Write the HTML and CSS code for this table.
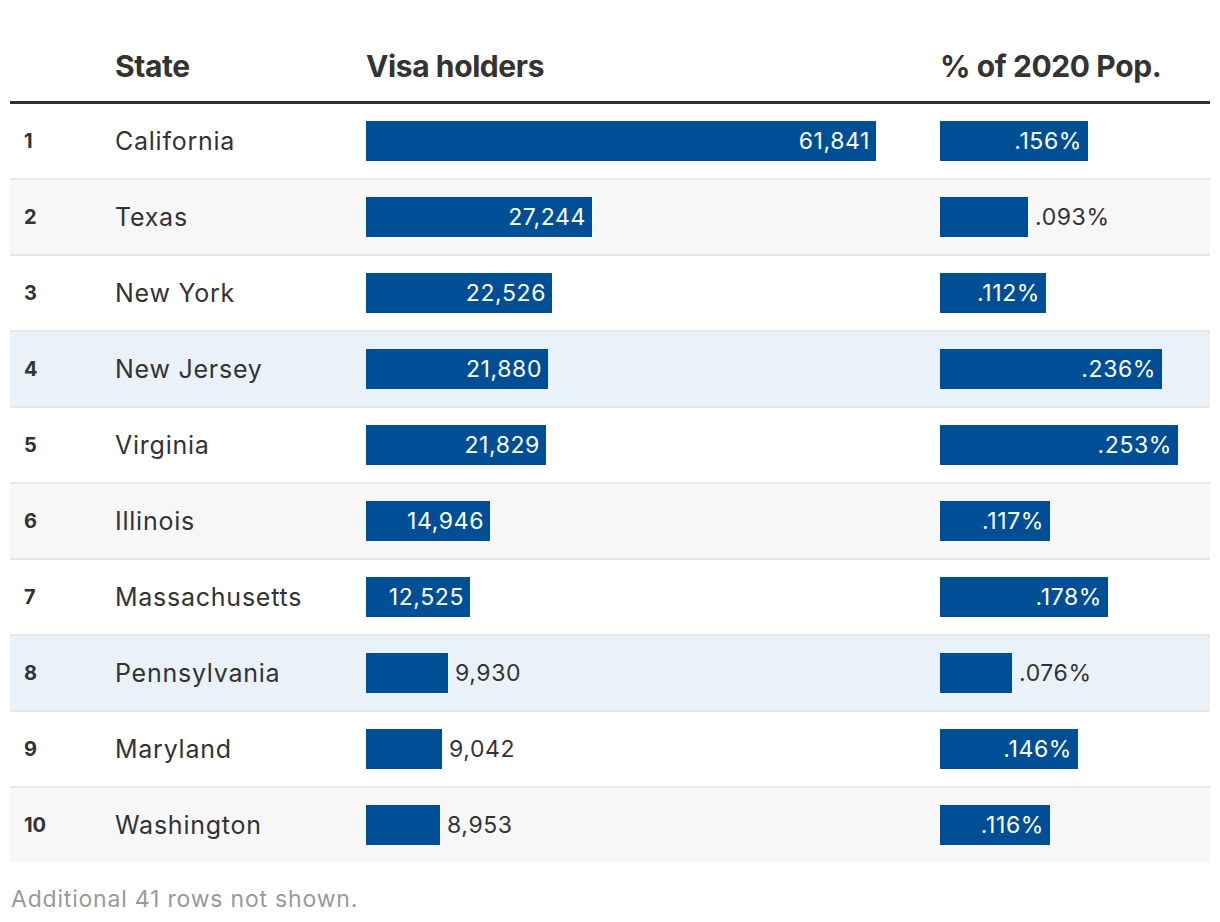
FILE: index.html
```html
<!DOCTYPE html>
<html lang="en">
<head>
<meta charset="utf-8">
<title>Visa holders by state</title>
<link rel="stylesheet" href="styles.css">
</head>
<body>
<div class="wrap">
  <div class="table">
    <div class="head">
      <div class="h-rank"></div>
      <div class="h-state">State</div>
      <div class="h-visa">Visa holders</div>
      <div class="h-pct">% of 2020 Pop.</div>
    </div>

    <div class="row">
      <div class="c-rank">1</div>
      <div class="c-state">California</div>
      <div class="c-visa"><div class="bar in" style="width:510px">61,841</div></div>
      <div class="c-pct"><div class="bar in" style="width:148px">.156%</div></div>
    </div>
    <div class="row alt">
      <div class="c-rank">2</div>
      <div class="c-state">Texas</div>
      <div class="c-visa"><div class="bar in" style="width:226px">27,244</div></div>
      <div class="c-pct"><div class="bar" style="width:88px"></div><span class="val">.093%</span></div>
    </div>
    <div class="row">
      <div class="c-rank">3</div>
      <div class="c-state">New York</div>
      <div class="c-visa"><div class="bar in" style="width:186px">22,526</div></div>
      <div class="c-pct"><div class="bar in" style="width:106px">.112%</div></div>
    </div>
    <div class="row hl">
      <div class="c-rank">4</div>
      <div class="c-state">New Jersey</div>
      <div class="c-visa"><div class="bar in" style="width:182px">21,880</div></div>
      <div class="c-pct"><div class="bar in" style="width:222px">.236%</div></div>
    </div>
    <div class="row">
      <div class="c-rank">5</div>
      <div class="c-state">Virginia</div>
      <div class="c-visa"><div class="bar in" style="width:180px">21,829</div></div>
      <div class="c-pct"><div class="bar in" style="width:238px">.253%</div></div>
    </div>
    <div class="row alt">
      <div class="c-rank">6</div>
      <div class="c-state">Illinois</div>
      <div class="c-visa"><div class="bar in" style="width:124px">14,946</div></div>
      <div class="c-pct"><div class="bar in" style="width:110px">.117%</div></div>
    </div>
    <div class="row">
      <div class="c-rank">7</div>
      <div class="c-state">Massachusetts</div>
      <div class="c-visa"><div class="bar in" style="width:104px">12,525</div></div>
      <div class="c-pct"><div class="bar in" style="width:168px">.178%</div></div>
    </div>
    <div class="row hl">
      <div class="c-rank">8</div>
      <div class="c-state">Pennsylvania</div>
      <div class="c-visa"><div class="bar" style="width:82px"></div><span class="val">9,930</span></div>
      <div class="c-pct"><div class="bar" style="width:72px"></div><span class="val">.076%</span></div>
    </div>
    <div class="row">
      <div class="c-rank">9</div>
      <div class="c-state">Maryland</div>
      <div class="c-visa"><div class="bar" style="width:76px"></div><span class="val">9,042</span></div>
      <div class="c-pct"><div class="bar in" style="width:138px">.146%</div></div>
    </div>
    <div class="row alt last">
      <div class="c-rank">10</div>
      <div class="c-state">Washington</div>
      <div class="c-visa"><div class="bar" style="width:74px"></div><span class="val">8,953</span></div>
      <div class="c-pct"><div class="bar in" style="width:110px">.116%</div></div>
    </div>
  </div>
  <p class="note">Additional 41 rows not shown.</p>
</div>
</body>
</html>
```

FILE: styles.css
```css
* { box-sizing: border-box; }

html, body {
  margin: 0;
  padding: 0;
  background: #fff;
}

body {
  font-family: Inter, "Noto Sans", "Liberation Sans", sans-serif;
  color: #333;
}

.wrap {
  padding: 0 10px;
}

.table {
  width: 1200px;
}

.head,
.row {
  display: grid;
  grid-template-columns: 105px 251px 574px 1fr;
  align-items: center;
}

.head {
  height: 104px;
  align-items: end;
  padding-bottom: 18px;
  border-bottom: 3px solid #333;
  font-weight: 700;
  font-size: 30px;
  line-height: 34px;
  letter-spacing: -0.4px;
  color: #333;
}

.row {
  height: 76px;
  border-bottom: 2px solid #e6e6e6;
  background: #fff;
}

.row.alt { background: #f7f7f7; }
.row.hl { background: #e9f2f8; }
.row.last { border-bottom: none; height: 74px; }

.c-rank {
  padding-left: 14px;
  font-weight: 700;
  font-size: 20px;
}

.c-state {
  font-size: 25px;
  letter-spacing: 0.75px;
  color: #333;
}

.c-visa,
.c-pct {
  display: flex;
  align-items: center;
}

.bar {
  height: 40px;
  background: #004f96;
  display: flex;
  align-items: center;
  justify-content: flex-end;
  padding-right: 6px;
  color: #fff;
  font-size: 23px;
  letter-spacing: 0.6px;
  white-space: nowrap;
}

.val {
  margin-left: 7px;
  font-size: 23px;
  letter-spacing: 0.6px;
  color: #333;
}

.note {
  margin: 22px 0 0 1px;
  font-size: 23px;
  line-height: 30px;
  color: #999;
  letter-spacing: 0.8px;
}
```
